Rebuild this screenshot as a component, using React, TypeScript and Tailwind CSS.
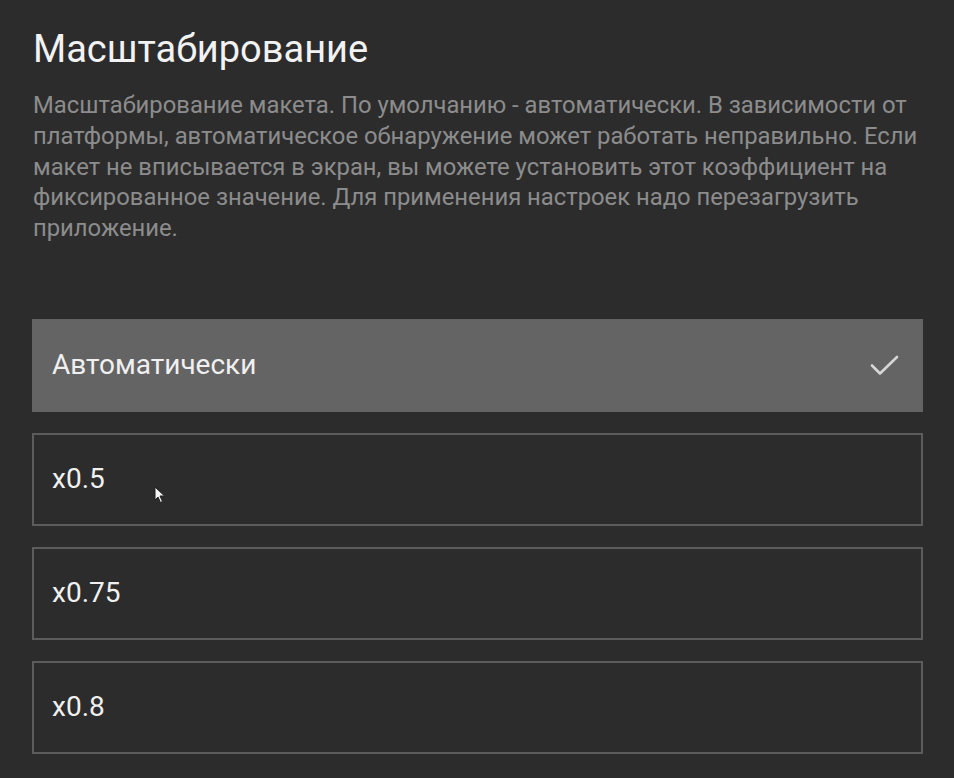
import React from "react";

const options = ["Автоматически", "x0.5", "x0.75", "x0.8"];

export default function App() {
  return (
    <div
      className="w-[954px] h-[778px] overflow-hidden bg-[#2c2c2c] pl-[32px] pr-[31px] pt-[24px]"
      style={{ fontFamily: "Roboto, 'Noto Sans', sans-serif" }}
    >
      <h1 className="text-[38px] leading-[50px] text-[#f2f2f2] pl-[1px] font-normal">
        Масштабирование
      </h1>
      <p className="mt-[16px] text-[23.8px] leading-[30.8px] text-[#8c8c8c] pl-[1px] whitespace-nowrap">
        Масштабирование макета. По умолчанию - автоматически. В зависимости от
        <br />
        платформы, автоматическое обнаружение может работать неправильно. Если
        <br />
        макет не вписывается в экран, вы можете установить этот коэффициент на
        <br />
        фиксированное значение. Для применения настроек надо перезагрузить
        <br />
        приложение.
      </p>
      <div className="mt-[75px] flex flex-col gap-[21px]">
        {options.map((o, i) =>
          i === 0 ? (
            <div
              key={o}
              className="h-[93px] bg-[#646464] flex items-center justify-between pl-[20px] pr-[23px]"
            >
              <span className="text-[28px] text-[#f0f0f0]">{o}</span>
              <svg width="30" height="24" viewBox="0 0 30 24" fill="none">
                <path
                  d="M2 12.5 L10 20.5 L27 4"
                  stroke="#d6d6d6"
                  strokeWidth="2.6"
                  strokeLinecap="round"
                  strokeLinejoin="round"
                />
              </svg>
            </div>
          ) : (
            <div
              key={o}
              className="relative h-[93px] border-2 border-[#5c5c5c] flex items-center pl-[18px]"
            >
              <span className="text-[28px] text-[#f0f0f0]">{o}</span>
              {i === 1 && (
                <svg
                  className="absolute left-[120px] top-[51px]"
                  width="12"
                  height="18"
                  viewBox="0 0 12 18"
                >
                  <path
                    d="M1 1 L1 14 L4 11 L6.5 16.5 L8.5 15.5 L6 10 L10.5 10 Z"
                    fill="#f5f5f5"
                    stroke="#222"
                    strokeWidth="1"
                  />
                </svg>
              )}
            </div>
          )
        )}
      </div>
    </div>
  );
}
